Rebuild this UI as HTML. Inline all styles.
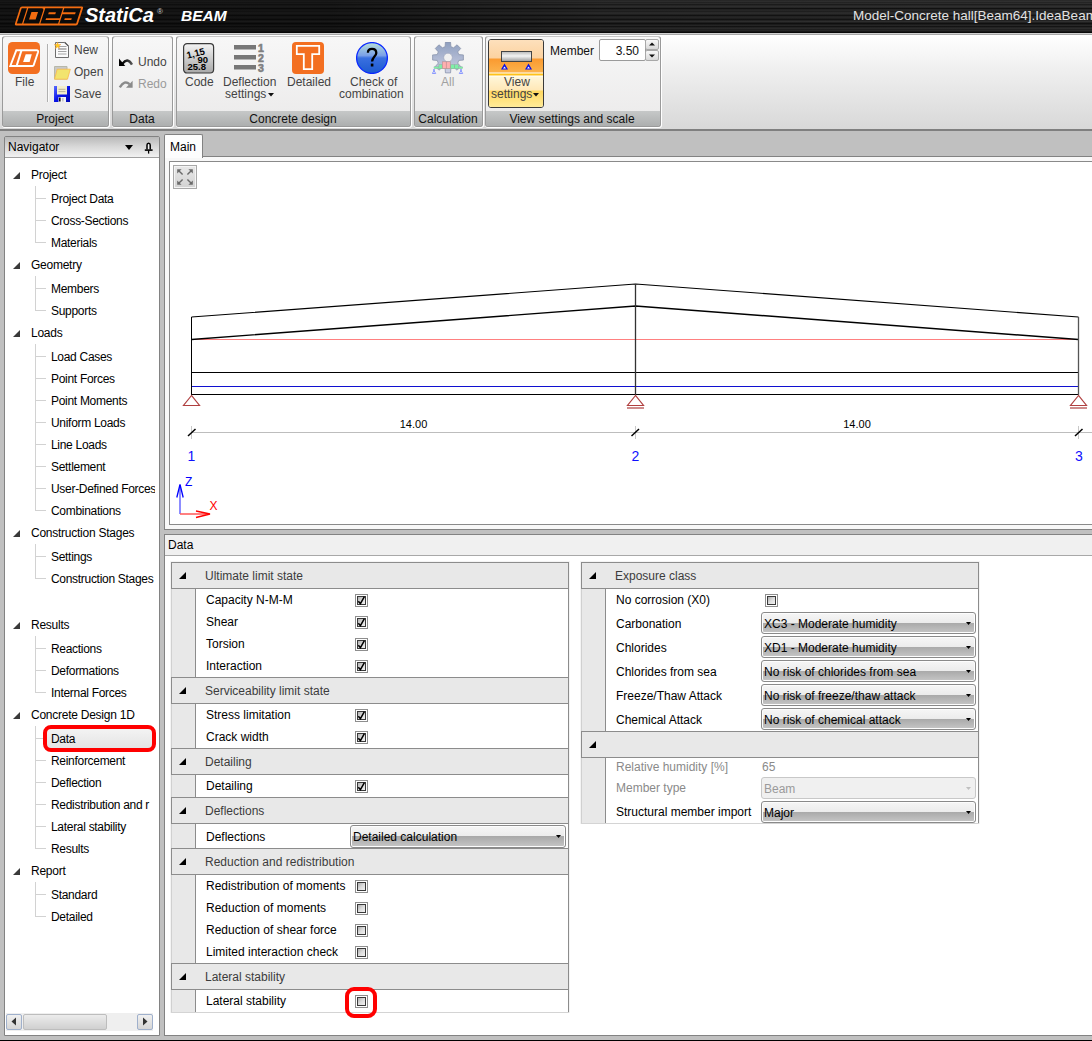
<!DOCTYPE html>
<html><head><meta charset="utf-8"><style>
html,body{margin:0;padding:0;}
body{width:1092px;height:1041px;overflow:hidden;position:relative;background:#c0c0c0;font-family:"Liberation Sans",sans-serif;}
div{position:absolute;}
.t{position:absolute;white-space:nowrap;}
</style></head><body>
<div style="left:0px;top:0px;width:1092px;height:33px;background:linear-gradient(90deg,rgba(0,0,0,0.55) 0%,rgba(0,0,0,0.5) 30%,rgba(0,0,0,0.15) 55%,rgba(0,0,0,0.05) 100%),linear-gradient(180deg,#2c2c2c 0px,#2c2c2c 1px,#333333 1px,#333333 2px,#262626 2px,#262626 3px,#303030 3px,#303030 4px,#1e1e1e 4px,#1e1e1e 5px,#2a2a2a 5px,#2a2a2a 6px,#333333 6px,#333333 7px,#2a2a2a 7px,#2a2a2a 8px,#121212 8px,#121212 9px,#262626 9px,#262626 10px,#2a2a2a 10px,#2a2a2a 11px,#222222 11px,#222222 12px,#2e2e2e 12px,#2e2e2e 13px,#303030 13px,#303030 14px,#242424 14px,#242424 15px,#141414 15px,#141414 16px,#262626 16px,#262626 17px,#2a2a2a 17px,#2a2a2a 18px,#222222 18px,#222222 19px,#151515 19px,#151515 20px,#262626 20px,#262626 21px,#333333 21px,#333333 22px,#222222 22px,#222222 23px,#111111 23px,#111111 24px,#1e1e1e 24px,#1e1e1e 25px,#2a2a2a 25px,#2a2a2a 26px,#151515 26px,#151515 27px,#262626 27px,#262626 28px,#2e2e2e 28px,#2e2e2e 29px,#222222 29px,#222222 30px,#2a2a2a 30px,#2a2a2a 31px,#1a1a1a 31px,#1a1a1a 32px,#0a0a0a 32px,#0a0a0a 33px)"></div>
<div style="left:0px;top:33px;width:1092px;height:1px;background:#d0d0d0"></div>
<div style="left:0px;top:34px;width:1092px;height:1px;background:#a8a8a8"></div>
<div style="left:0px;top:35px;width:1092px;height:94px;background:linear-gradient(180deg,#ffffff 0%,#f0f0f0 35%,#d8d8d8 100%)"></div>
<div style="left:0px;top:129px;width:1092px;height:2px;background:#7f7f7f"></div>
<div style="left:2px;top:36px;width:108px;height:92px;background:#ffffff;border-radius:3px"></div>
<div style="left:2px;top:36px;width:107px;height:91px;background:linear-gradient(180deg,#f7f7f7 0%,#ebeaea 100%);border:1px solid #b4b4b4;box-sizing:border-box;border-radius:3px"></div>
<div style="left:3px;top:111px;width:105px;height:15px;background:linear-gradient(180deg,#c6c8c8 0%,#adafaf 100%);border-radius:0 0 2px 2px"></div>
<div style="left:2px;top:36px;width:107px;height:91px;border:1px solid #9a9a9a;border-top-color:#c8c8c8;box-sizing:border-box;border-radius:3px"></div>
<div class="t" style="left:-145px;width:400px;text-align:center;top:113px;font-size:12px;line-height:12px;color:#111;">Project</div>
<div style="left:112px;top:36px;width:62px;height:92px;background:#ffffff;border-radius:3px"></div>
<div style="left:112px;top:36px;width:61px;height:91px;background:linear-gradient(180deg,#f7f7f7 0%,#ebeaea 100%);border:1px solid #b4b4b4;box-sizing:border-box;border-radius:3px"></div>
<div style="left:113px;top:111px;width:59px;height:15px;background:linear-gradient(180deg,#c6c8c8 0%,#adafaf 100%);border-radius:0 0 2px 2px"></div>
<div style="left:112px;top:36px;width:61px;height:91px;border:1px solid #9a9a9a;border-top-color:#c8c8c8;box-sizing:border-box;border-radius:3px"></div>
<div class="t" style="left:-58px;width:400px;text-align:center;top:113px;font-size:12px;line-height:12px;color:#111;">Data</div>
<div style="left:176px;top:36px;width:236px;height:92px;background:#ffffff;border-radius:3px"></div>
<div style="left:176px;top:36px;width:235px;height:91px;background:linear-gradient(180deg,#f7f7f7 0%,#ebeaea 100%);border:1px solid #b4b4b4;box-sizing:border-box;border-radius:3px"></div>
<div style="left:177px;top:111px;width:233px;height:15px;background:linear-gradient(180deg,#c6c8c8 0%,#adafaf 100%);border-radius:0 0 2px 2px"></div>
<div style="left:176px;top:36px;width:235px;height:91px;border:1px solid #9a9a9a;border-top-color:#c8c8c8;box-sizing:border-box;border-radius:3px"></div>
<div class="t" style="left:93px;width:400px;text-align:center;top:113px;font-size:12px;line-height:12px;color:#111;">Concrete design</div>
<div style="left:414px;top:36px;width:70px;height:92px;background:#ffffff;border-radius:3px"></div>
<div style="left:414px;top:36px;width:69px;height:91px;background:linear-gradient(180deg,#f7f7f7 0%,#ebeaea 100%);border:1px solid #b4b4b4;box-sizing:border-box;border-radius:3px"></div>
<div style="left:415px;top:111px;width:67px;height:15px;background:linear-gradient(180deg,#c6c8c8 0%,#adafaf 100%);border-radius:0 0 2px 2px"></div>
<div style="left:414px;top:36px;width:69px;height:91px;border:1px solid #9a9a9a;border-top-color:#c8c8c8;box-sizing:border-box;border-radius:3px"></div>
<div class="t" style="left:248px;width:400px;text-align:center;top:113px;font-size:12px;line-height:12px;color:#111;">Calculation</div>
<div style="left:485px;top:36px;width:177px;height:92px;background:#ffffff;border-radius:3px"></div>
<div style="left:485px;top:36px;width:176px;height:91px;background:linear-gradient(180deg,#f7f7f7 0%,#ebeaea 100%);border:1px solid #b4b4b4;box-sizing:border-box;border-radius:3px"></div>
<div style="left:486px;top:111px;width:174px;height:15px;background:linear-gradient(180deg,#c6c8c8 0%,#adafaf 100%);border-radius:0 0 2px 2px"></div>
<div style="left:485px;top:36px;width:176px;height:91px;border:1px solid #9a9a9a;border-top-color:#c8c8c8;box-sizing:border-box;border-radius:3px"></div>
<div class="t" style="left:372px;width:400px;text-align:center;top:113px;font-size:12px;line-height:12px;color:#111;">View settings and scale</div>
<svg style="position:absolute;left:8px;top:42px;" width="32" height="32" viewBox="0 0 32 32"><rect x="0" y="0" width="32" height="32" rx="4.5" fill="#f36f21"/><path d="M8.3 8.3 H28.6 Q30.6 8.3 30 10.3 L25.6 23.4 Q25.3 24 24.6 24 H2.3 Z" fill="none" stroke="#fff" stroke-width="1.9"/><path d="M13.4 8.6 L8.7 23.6" stroke="#fff" stroke-width="1.9"/><path d="M17.7 12.3 H23.8 L21.6 19.9 H15.1 Z" fill="#fff"/></svg>
<div class="t" style="left:15px;top:76px;font-size:12px;line-height:12px;color:#444;">File</div>
<div style="left:47px;top:44px;width:1px;height:58px;background:#b0b0b0"></div>
<div style="left:48px;top:44px;width:1px;height:58px;background:#fafafa"></div>
<svg style="position:absolute;left:54px;top:41px;" width="17" height="18" viewBox="0 0 17 18"><path d="M1.5 1.5 H10.8 L14.5 5.2 V16.5 H1.5 Z" fill="#fbfbfb" stroke="#6e6e6e" stroke-width="1"/><path d="M10.8 1.5 L14.5 5.2" stroke="#555" stroke-width="1.2"/><path d="M4 5.5h8.5M4 10.5h8.5M4 13h8.5" stroke="#9a9a9a" stroke-width="0.9"/><path d="M4 8h8.5" stroke="#a8a8a8" stroke-width="1.6"/><path d="M3.5 1.2 L4.3 3.6 L6.8 3.6 L4.8 5.1 L5.6 7.5 L3.5 6 L1.4 7.5 L2.2 5.1 L0.2 3.6 L2.7 3.6 Z" fill="#ffd21a" stroke="#f39a3a" stroke-width="0.5"/></svg>
<div class="t" style="left:74px;top:44px;font-size:12px;line-height:12px;color:#444;">New</div>
<svg style="position:absolute;left:54px;top:66px;" width="17" height="14" viewBox="0 0 17 14"><path d="M0.5 0.5 H13 V13 H0.5 Z" fill="#c8c8c8" stroke="#b8b8a8" stroke-width="1"/><path d="M3.2 3.2 H16.3 L13.5 13.2 H0.5 Z" fill="#f2e46e" stroke="#fbb94a" stroke-width="0.8"/></svg>
<div class="t" style="left:74px;top:66px;font-size:12px;line-height:12px;color:#444;">Open</div>
<svg style="position:absolute;left:54px;top:86px;" width="16" height="16" viewBox="0 0 16 16"><defs><linearGradient id="gs" x1="0" y1="0" x2="1" y2="1"><stop offset="0" stop-color="#5a6cff"/><stop offset="0.5" stop-color="#0a14e8"/><stop offset="1" stop-color="#0008b0"/></linearGradient></defs><rect x="0" y="0" width="16" height="16" fill="url(#gs)"/><rect x="3" y="0" width="10" height="8.5" fill="#f4efcc"/><path d="M4.5 3.3h7M4.5 5.6h7" stroke="#a8a08a" stroke-width="0.8"/><rect x="4.5" y="11" width="7.5" height="5" fill="#f4f4f4"/><rect x="5" y="11.5" width="1.6" height="4" fill="#111"/><rect x="8.5" y="12" width="0.8" height="3.5" fill="#999"/></svg>
<div class="t" style="left:74px;top:88px;font-size:12px;line-height:12px;color:#444;">Save</div>
<svg style="position:absolute;left:118px;top:56px;" width="16" height="12" viewBox="0 0 16 12"><defs><linearGradient id="gu" x1="0" y1="0" x2="1" y2="0"><stop offset="0" stop-color="#000"/><stop offset="1" stop-color="#555"/></linearGradient></defs><path d="M4.5 7.6 Q9.5 0.8 14 8.6" fill="none" stroke="url(#gu)" stroke-width="2.4"/><polygon points="1,2.6 1,10 7.3,10" fill="#000"/></svg>
<div class="t" style="left:138px;top:56px;font-size:12px;line-height:12px;color:#444;">Undo</div>
<svg style="position:absolute;left:118px;top:79px;" width="16" height="12" viewBox="0 0 16 12"><path d="M1.8 8.4 Q6.5 0.6 11.5 5.2" fill="none" stroke="#8a8a8a" stroke-width="2.4"/><polygon points="14.6,1.8 14.6,8.8 8,8.8" fill="#8a8a8a"/></svg>
<div class="t" style="left:138px;top:78px;font-size:12px;line-height:12px;color:#9a9a9a;">Redo</div>
<svg style="position:absolute;left:182px;top:42px;" width="33" height="32" viewBox="0 0 33 32"><defs><linearGradient id="gc" x1="0" y1="0" x2="0" y2="1"><stop offset="0" stop-color="#f4f4f4"/><stop offset="1" stop-color="#a8a8a8"/></linearGradient></defs><rect x="1.6" y="1.6" width="30" height="29.4" rx="3.5" fill="url(#gc)" stroke="#3a3a3a" stroke-width="1.2"/><text x="4.5" y="15" font-family="Liberation Sans" font-weight="bold" font-size="9.5" fill="#000" transform="rotate(-14 12 12)">1,15</text><text x="15.5" y="20.5" font-family="Liberation Sans" font-weight="bold" font-size="9.5" fill="#000">90</text><text x="5.5" y="28" font-family="Liberation Sans" font-weight="bold" font-size="9.5" fill="#000">25.8</text></svg>
<div class="t" style="left:185px;top:76px;font-size:12px;line-height:12px;color:#444;">Code</div>
<svg style="position:absolute;left:232px;top:42px;" width="34" height="32" viewBox="0 0 34 32"><rect x="2" y="3" width="22" height="4.5" fill="#777"/><rect x="2" y="13" width="22" height="4.5" fill="#777"/><rect x="2" y="23" width="22" height="4.5" fill="#777"/><text x="26" y="9.8" font-family="Liberation Sans" font-weight="bold" font-size="10.5" fill="#808080" stroke="#808080" stroke-width="0.6">1</text><text x="26" y="19.8" font-family="Liberation Sans" font-weight="bold" font-size="10.5" fill="#808080" stroke="#808080" stroke-width="0.6">2</text><text x="26" y="29.8" font-family="Liberation Sans" font-weight="bold" font-size="10.5" fill="#808080" stroke="#808080" stroke-width="0.6">3</text></svg>
<div class="t" style="left:223px;top:76px;font-size:12px;line-height:12px;color:#444;">Deflection</div>
<div class="t" style="left:225px;top:88px;font-size:12px;line-height:12px;color:#444;">settings</div>
<svg style="position:absolute;left:268px;top:93px;" width="6" height="4" viewBox="0 0 6 4"><polygon points="0,0 6,0 3,3.5" fill="#111"/></svg>
<svg style="position:absolute;left:292px;top:42px;" width="32" height="32" viewBox="0 0 32 32"><rect x="0" y="0" width="32" height="32" rx="4" fill="#f36f21"/><path d="M4.8 3.8 H27.2 V12.2 H20.2 V27.2 H11.8 V12.2 H4.8 Z" fill="none" stroke="#fff" stroke-width="1.8"/></svg>
<div class="t" style="left:287px;top:76px;font-size:12px;line-height:12px;color:#444;">Detailed</div>
<svg style="position:absolute;left:356px;top:42px;" width="32" height="32" viewBox="0 0 32 32"><defs><linearGradient id="gq" x1="0" y1="0" x2="0" y2="1"><stop offset="0" stop-color="#b8e0d8"/><stop offset="0.42" stop-color="#7aa0e8"/><stop offset="0.5" stop-color="#3a70e0"/><stop offset="1" stop-color="#1c5ad0"/></linearGradient></defs><circle cx="16" cy="16" r="15.4" fill="url(#gq)" stroke="#0a28ff" stroke-width="1.3"/><path d="M11.9 10.8 C11.9 8 13.8 6.9 16 6.9 C18.6 6.9 20.3 8.6 20.3 11 C20.3 14.2 16.1 15.2 16.1 19.6" fill="none" stroke="#000" stroke-width="2.3"/><rect x="14.8" y="21.6" width="2.6" height="2.9" fill="#000"/></svg>
<div class="t" style="left:350px;top:76px;font-size:12px;line-height:12px;color:#444;">Check of</div>
<div class="t" style="left:339px;top:88px;font-size:12px;line-height:12px;color:#444;">combination</div>
<svg style="position:absolute;left:432px;top:42px;" width="32" height="32" viewBox="0 0 32 32"><defs><linearGradient id="gg" x1="0" y1="0" x2="0" y2="1"><stop offset="0" stop-color="#8e9fbf"/><stop offset="1" stop-color="#cdd0e4"/></linearGradient></defs><path d="M13.10 4.68 L13.43 0.11 L18.57 0.11 L18.90 4.68 L21.60 5.80 L25.06 2.80 L28.70 6.44 L25.70 9.90 L26.82 12.60 L31.39 12.93 L31.39 18.07 L26.82 18.40 L25.70 21.10 L28.70 24.56 L25.06 28.20 L21.60 25.20 L18.90 26.32 L18.57 30.89 L13.43 30.89 L13.10 26.32 L10.40 25.20 L6.94 28.20 L3.30 24.56 L6.30 21.10 L5.18 18.40 L0.61 18.07 L0.61 12.93 L5.18 12.60 L6.30 9.90 L3.30 6.44 L6.94 2.80 L10.40 5.80 Z" fill="url(#gg)" stroke="#8a94ac" stroke-width="0.8"/><circle cx="16" cy="15.5" r="4.3" fill="#f0f0f0" stroke="#9aa2b8" stroke-width="0.6"/><rect x="2" y="24.8" width="28.7" height="1.8" fill="#7ef0a8" stroke="#8aa89a" stroke-width="0.4"/><rect x="6.9" y="22.6" width="3.2" height="4" fill="#7ef0a8" stroke="#8aa89a" stroke-width="0.4"/><rect x="18.8" y="22.6" width="3.4" height="4" fill="#7ef0a8" stroke="#8aa89a" stroke-width="0.4"/><rect x="22.8" y="22.6" width="3.5" height="4" fill="#7ef0a8" stroke="#8aa89a" stroke-width="0.4"/><rect x="10.3" y="19.8" width="7.9" height="6.8" fill="#ffb0b0" stroke="#b08888" stroke-width="0.5"/><path d="M14.4 19.8v6.8" stroke="#b08888" stroke-width="0.6"/><path d="M0.3 31.5 L2 28.6 L3.7 31.5 Z M27.3 31.5 L29 28.6 L30.7 31.5 Z" fill="none" stroke="#7f8fff" stroke-width="0.9"/><circle cx="2" cy="28" r="0.9" fill="#7f8fff"/><circle cx="29" cy="28" r="0.9" fill="#7f8fff"/></svg>
<div class="t" style="left:441px;top:76px;font-size:12px;line-height:12px;color:#a0a0a0;">All</div>
<div style="left:488px;top:39px;width:56px;height:69px;border:1px solid #3a3a3a;box-sizing:border-box;border-radius:3px;background:#fff"></div>
<div style="left:489px;top:40px;width:54px;height:67px;border-radius:2px;background:linear-gradient(180deg,#fde0bc 0px,#fcd2a0 18px,#fa9a30 19px,#fbb24c 32px,#ffffff 33px,#ffc21a 34px,#ffc21a 35px,#ffffff 36px,#fff6d8 37px,#ffe8b8 50px,#ffd860 51px,#ffeb98 67px)"></div>
<svg style="position:absolute;left:500px;top:50px;" width="34" height="22" viewBox="0 0 34 22"><defs><linearGradient id="gb" x1="0" y1="0" x2="0" y2="1"><stop offset="0" stop-color="#b8b8b8"/><stop offset="0.45" stop-color="#f4f4f4"/><stop offset="1" stop-color="#9a9a9a"/></linearGradient></defs><rect x="1.5" y="1.5" width="30" height="10" fill="url(#gb)" stroke="#444" stroke-width="1"/><path d="M4.5 13.5 L1 19.5 H8 Z M28.5 13.5 L25 19.5 H32 Z" fill="#0a10e8"/><path d="M4.5 16.5 L3 18.5 H6 Z M28.5 16.5 L27 18.5 H30 Z" fill="#fff"/></svg>
<div class="t" style="left:504px;top:76px;font-size:12px;line-height:12px;color:#444;">View</div>
<div class="t" style="left:491px;top:88px;font-size:12px;line-height:12px;color:#444;">settings</div>
<svg style="position:absolute;left:533px;top:93px;" width="6" height="4" viewBox="0 0 6 4"><polygon points="0,0 6,0 3,3.5" fill="#111"/></svg>
<div class="t" style="left:550px;top:45px;font-size:12px;line-height:12px;color:#111;">Member</div>
<div style="left:599px;top:39px;width:47px;height:22px;background:#fff;border:1px solid #9a9a9a;box-sizing:border-box;border-radius:2px"></div>
<div class="t" style="right:453px;top:45px;font-size:12px;line-height:12px;color:#111;">3.50</div>
<div style="left:645px;top:39px;width:14px;height:11px;background:linear-gradient(180deg,#f8f8f8,#d8d8d8);border:1px solid #a8a8a8;box-sizing:border-box;border-radius:2px"></div>
<div style="left:645px;top:50px;width:14px;height:11px;background:linear-gradient(180deg,#f8f8f8,#d8d8d8);border:1px solid #a8a8a8;box-sizing:border-box;border-radius:2px"></div>
<svg style="position:absolute;left:649px;top:42px;" width="6" height="4" viewBox="0 0 6 4"><polygon points="0,3.5 6,3.5 3,0.5" fill="#111"/></svg>
<svg style="position:absolute;left:649px;top:54px;" width="6" height="4" viewBox="0 0 6 4"><polygon points="0,0.5 6,0.5 3,3.5" fill="#111"/></svg>
<svg style="position:absolute;left:0px;top:0px;" width="100" height="33" viewBox="0 0 100 33"><g transform="translate(0,25.4) skewX(-17.7) translate(0,-25.4)"><rect x="14.4" y="6.4" width="63.1" height="19" rx="1.6" fill="#f36c10"/><g fill="#0a0a0a"><rect x="16.2" y="8.3" width="5.3" height="15.3"/><path d="M22.8 8.3 H36.5 Q38.5 8.3 38.5 10.3 V23.6 H22.8 Z M27.2 12.1 V19.6 H33.8 V12.1 Z" fill-rule="evenodd"/><path d="M39.8 8.3 H57.5 V18.2 H43.8 V20 H57.5 V23.6 H39.8 Z M44.6 12.2 V14.2 H51.7 V12.2 Z" fill-rule="evenodd"/><path d="M58.8 8.3 H75.6 V23.6 H58.8 V14.2 H71.5 V12.2 H58.8 Z M62.5 18.2 V20 H69.5 V18.2 Z" fill-rule="evenodd"/></g></g></svg>
<div class="t" style="left:85px;top:5px;font-size:20px;line-height:20px;color:#fff;font-weight:bold;font-style:italic;letter-spacing:0px">StatiCa</div>
<div class="t" style="left:157px;top:8px;font-size:8px;line-height:8px;color:#ccc;">&reg;</div>
<div class="t" style="left:181px;top:8px;font-size:15.5px;line-height:15.5px;color:#fff;font-weight:bold;font-style:italic;">BEAM</div>
<div class="t" style="left:853px;top:9px;font-size:13.5px;line-height:13.5px;color:#e2e2e2;">Model-Concrete hall[Beam64].IdeaBeam</div>
<div style="left:4px;top:136px;width:156px;height:900px;background:#fff;border:1px solid #828282;box-sizing:border-box;border-radius:2px 2px 0 0"></div>
<div style="left:5px;top:137px;width:154px;height:21px;background:linear-gradient(180deg,#b9b9b9 0%,#d6d6d6 45%,#f2f2f2 100%);border-bottom:1px solid #a0a0a0;box-sizing:border-box"></div>
<div class="t" style="left:8px;top:141px;font-size:12px;line-height:12px;color:#000;">Navigator</div>
<div style="left:164px;top:131px;width:928px;height:26px;background:#c0c0c0"></div>
<div style="left:202px;top:156px;width:890px;height:1px;background:#828282"></div>
<div style="left:164px;top:157px;width:928px;height:373px;background:#f8f8f8;border-left:1px solid #828282;border-bottom:1px solid #828282;box-sizing:border-box"></div>
<div style="left:164px;top:134px;width:39px;height:24px;background:#fdfdfd;border:1px solid #828282;border-bottom:none;box-sizing:border-box;border-radius:2px 2px 0 0"></div>
<div class="t" style="left:170px;top:141px;font-size:12px;line-height:12px;color:#000;">Main</div>
<div style="left:169px;top:161px;width:923px;height:364px;background:#fff;border-left:1px solid #8a8a8a;border-top:1px solid #8a8a8a;border-bottom:1px solid #8a8a8a;box-sizing:border-box"></div>
<div style="left:173px;top:165px;width:24px;height:24px;background:linear-gradient(180deg,#e8e8e8,#d2d2d2);border:1px solid #a8a8a8;box-shadow:inset 0 0 0 1px #f4f4f4;box-sizing:border-box"></div>
<svg style="position:absolute;left:173px;top:165px;" width="24" height="24" viewBox="0 0 24 24"><g fill="#6a6a6a" stroke="#6a6a6a" stroke-width="1.4"><path d="M4.2 4.2 H8.6 L4.2 8.6 Z" stroke="none"/><path d="M6 6 L9.6 9.6"/><path d="M19.8 4.2 H15.4 L19.8 8.6 Z" stroke="none"/><path d="M18 6 L14.4 9.6"/><path d="M4.2 19.8 H8.6 L4.2 15.4 Z" stroke="none"/><path d="M6 18 L9.6 14.4"/><path d="M19.8 19.8 H15.4 L19.8 15.4 Z" stroke="none"/><path d="M18 18 L14.4 14.4"/></g></svg>
<svg style="position:absolute;left:0px;top:0px;" width="1092" height="530" viewBox="0 0 1092 530">
<line x1="191.5" y1="339.5" x2="1078.5" y2="339.5" stroke="#ff8080" stroke-width="1"/>
<polyline points="191.5,317 635.5,284 1078.5,317" fill="none" stroke="#000" stroke-width="1.1"/>
<polyline points="191.5,339.5 635.5,306 1078.5,339.5" fill="none" stroke="#000" stroke-width="1.4"/>
<line x1="191.5" y1="372.5" x2="1078.5" y2="372.5" stroke="#000" stroke-width="1.05"/>
<line x1="191.5" y1="386.5" x2="1078.5" y2="386.5" stroke="#1010d0" stroke-width="1.2"/>
<line x1="191.5" y1="394.5" x2="1078.5" y2="394.5" stroke="#000" stroke-width="1.2"/>
<line x1="191.5" y1="317" x2="191.5" y2="395" stroke="#000" stroke-width="1"/>
<line x1="635.5" y1="284" x2="635.5" y2="395" stroke="#333" stroke-width="1.3"/>
<line x1="1078.5" y1="317" x2="1078.5" y2="395" stroke="#555" stroke-width="1.3"/>
<g fill="none" stroke="#b04040" stroke-width="1.2">
<polygon points="191.5,395.5 183.5,405.5 199.5,405.5"/>
<polygon points="635.5,395.5 627.5,405.5 643.5,405.5"/><line x1="627" y1="408" x2="644" y2="408"/>
<polygon points="1078.5,395.5 1070.5,405.5 1086.5,405.5"/><line x1="1070" y1="408" x2="1087" y2="408"/>
</g>
<line x1="191" y1="432.5" x2="1092" y2="432.5" stroke="#bdbdbd" stroke-width="1.2"/>
<g stroke="#c8c8c8" stroke-width="1"><line x1="191.5" y1="426" x2="191.5" y2="439"/><line x1="635.5" y1="426" x2="635.5" y2="439"/><line x1="1078.5" y1="426" x2="1078.5" y2="439"/></g>
<g stroke="#000" stroke-width="1.5"><line x1="188" y1="436" x2="195.5" y2="429"/><line x1="631.5" y1="436" x2="639" y2="429"/><line x1="1075" y1="436" x2="1082.5" y2="429"/></g>
<text x="413.5" y="428" text-anchor="middle" font-family="Liberation Sans" font-size="11" fill="#000">14.00</text>
<text x="857" y="428" text-anchor="middle" font-family="Liberation Sans" font-size="11" fill="#000">14.00</text>
<g font-family="Liberation Sans" font-size="14" fill="#1010ff" text-anchor="middle"><text x="191.5" y="461">1</text><text x="635.5" y="461">2</text><text x="1079" y="461">3</text></g>
<line x1="180" y1="514" x2="180" y2="485" stroke="#7070ff" stroke-width="1.6"/>
<polyline points="176.8,497.5 180,484.5 183.2,497.5" fill="none" stroke="#0000ff" stroke-width="1.3"/>
<line x1="180" y1="514" x2="209" y2="514" stroke="#ff6060" stroke-width="1.6"/>
<polyline points="196,511 210,514 196,517.5" fill="none" stroke="#ff0000" stroke-width="1.3"/>
<text x="185" y="486" font-family="Liberation Sans" font-size="12" fill="#0000ff">Z</text>
<text x="209.5" y="510" font-family="Liberation Sans" font-size="12" fill="#ff0000">X</text>
</svg>
<div style="left:164px;top:534px;width:928px;height:502px;background:#fff;border-left:1px solid #828282;border-top:1px solid #828282;border-bottom:1px solid #828282;box-sizing:border-box"></div>
<div style="left:165px;top:535px;width:927px;height:21px;background:#f0f0f0;border-bottom:1px solid #a8a8a8;box-sizing:border-box"></div>
<div class="t" style="left:168px;top:539px;font-size:12px;line-height:12px;color:#000;">Data</div>
<div style="left:0;top:0;width:155px;height:1012px;overflow:hidden">
<svg style="position:absolute;left:12px;top:171px;" width="10" height="9" viewBox="0 0 10 9"><polygon points="8,1 8,8 1,8" fill="#3a3a3a"/></svg>
<div class="t" style="left:31px;top:169px;font-size:12px;line-height:12px;color:#000;letter-spacing:-0.25px">Project</div>
<div style="left:35px;top:186px;width:1px;height:57px;background:#d2d2d2"></div>
<div style="left:36px;top:198px;width:10px;height:1px;background:#d2d2d2"></div>
<div class="t" style="left:51px;top:193px;font-size:12px;line-height:12px;color:#000;letter-spacing:-0.3px">Project Data</div>
<div style="left:36px;top:220px;width:10px;height:1px;background:#d2d2d2"></div>
<div class="t" style="left:51px;top:215px;font-size:12px;line-height:12px;color:#000;letter-spacing:-0.3px">Cross-Sections</div>
<div style="left:36px;top:242px;width:10px;height:1px;background:#d2d2d2"></div>
<div class="t" style="left:51px;top:237px;font-size:12px;line-height:12px;color:#000;letter-spacing:-0.3px">Materials</div>
<svg style="position:absolute;left:12px;top:261px;" width="10" height="9" viewBox="0 0 10 9"><polygon points="8,1 8,8 1,8" fill="#3a3a3a"/></svg>
<div class="t" style="left:31px;top:259px;font-size:12px;line-height:12px;color:#000;letter-spacing:-0.25px">Geometry</div>
<div style="left:35px;top:276px;width:1px;height:35px;background:#d2d2d2"></div>
<div style="left:36px;top:288px;width:10px;height:1px;background:#d2d2d2"></div>
<div class="t" style="left:51px;top:283px;font-size:12px;line-height:12px;color:#000;letter-spacing:-0.3px">Members</div>
<div style="left:36px;top:310px;width:10px;height:1px;background:#d2d2d2"></div>
<div class="t" style="left:51px;top:305px;font-size:12px;line-height:12px;color:#000;letter-spacing:-0.3px">Supports</div>
<svg style="position:absolute;left:12px;top:329px;" width="10" height="9" viewBox="0 0 10 9"><polygon points="8,1 8,8 1,8" fill="#3a3a3a"/></svg>
<div class="t" style="left:31px;top:327px;font-size:12px;line-height:12px;color:#000;letter-spacing:-0.25px">Loads</div>
<div style="left:35px;top:344px;width:1px;height:167px;background:#d2d2d2"></div>
<div style="left:36px;top:356px;width:10px;height:1px;background:#d2d2d2"></div>
<div class="t" style="left:51px;top:351px;font-size:12px;line-height:12px;color:#000;letter-spacing:-0.3px">Load Cases</div>
<div style="left:36px;top:378px;width:10px;height:1px;background:#d2d2d2"></div>
<div class="t" style="left:51px;top:373px;font-size:12px;line-height:12px;color:#000;letter-spacing:-0.3px">Point Forces</div>
<div style="left:36px;top:400px;width:10px;height:1px;background:#d2d2d2"></div>
<div class="t" style="left:51px;top:395px;font-size:12px;line-height:12px;color:#000;letter-spacing:-0.3px">Point Moments</div>
<div style="left:36px;top:422px;width:10px;height:1px;background:#d2d2d2"></div>
<div class="t" style="left:51px;top:417px;font-size:12px;line-height:12px;color:#000;letter-spacing:-0.3px">Uniform Loads</div>
<div style="left:36px;top:444px;width:10px;height:1px;background:#d2d2d2"></div>
<div class="t" style="left:51px;top:439px;font-size:12px;line-height:12px;color:#000;letter-spacing:-0.3px">Line Loads</div>
<div style="left:36px;top:466px;width:10px;height:1px;background:#d2d2d2"></div>
<div class="t" style="left:51px;top:461px;font-size:12px;line-height:12px;color:#000;letter-spacing:-0.3px">Settlement</div>
<div style="left:36px;top:488px;width:10px;height:1px;background:#d2d2d2"></div>
<div class="t" style="left:51px;top:483px;font-size:12px;line-height:12px;color:#000;letter-spacing:-0.3px">User-Defined Forces</div>
<div style="left:36px;top:510px;width:10px;height:1px;background:#d2d2d2"></div>
<div class="t" style="left:51px;top:505px;font-size:12px;line-height:12px;color:#000;letter-spacing:-0.3px">Combinations</div>
<svg style="position:absolute;left:12px;top:529px;" width="10" height="9" viewBox="0 0 10 9"><polygon points="8,1 8,8 1,8" fill="#3a3a3a"/></svg>
<div class="t" style="left:31px;top:527px;font-size:12px;line-height:12px;color:#000;letter-spacing:-0.25px">Construction Stages</div>
<div style="left:35px;top:544px;width:1px;height:35px;background:#d2d2d2"></div>
<div style="left:36px;top:556px;width:10px;height:1px;background:#d2d2d2"></div>
<div class="t" style="left:51px;top:551px;font-size:12px;line-height:12px;color:#000;letter-spacing:-0.3px">Settings</div>
<div style="left:36px;top:578px;width:10px;height:1px;background:#d2d2d2"></div>
<div class="t" style="left:51px;top:573px;font-size:12px;line-height:12px;color:#000;letter-spacing:-0.3px">Construction Stages</div>
<svg style="position:absolute;left:12px;top:621px;" width="10" height="9" viewBox="0 0 10 9"><polygon points="8,1 8,8 1,8" fill="#3a3a3a"/></svg>
<div class="t" style="left:31px;top:619px;font-size:12px;line-height:12px;color:#000;letter-spacing:-0.25px">Results</div>
<div style="left:35px;top:636px;width:1px;height:57px;background:#d2d2d2"></div>
<div style="left:36px;top:648px;width:10px;height:1px;background:#d2d2d2"></div>
<div class="t" style="left:51px;top:643px;font-size:12px;line-height:12px;color:#000;letter-spacing:-0.3px">Reactions</div>
<div style="left:36px;top:670px;width:10px;height:1px;background:#d2d2d2"></div>
<div class="t" style="left:51px;top:665px;font-size:12px;line-height:12px;color:#000;letter-spacing:-0.3px">Deformations</div>
<div style="left:36px;top:692px;width:10px;height:1px;background:#d2d2d2"></div>
<div class="t" style="left:51px;top:687px;font-size:12px;line-height:12px;color:#000;letter-spacing:-0.3px">Internal Forces</div>
<svg style="position:absolute;left:12px;top:711px;" width="10" height="9" viewBox="0 0 10 9"><polygon points="8,1 8,8 1,8" fill="#3a3a3a"/></svg>
<div class="t" style="left:31px;top:709px;font-size:12px;line-height:12px;color:#000;letter-spacing:-0.25px">Concrete Design 1D</div>
<div style="left:35px;top:726px;width:1px;height:123px;background:#d2d2d2"></div>
<div style="left:36px;top:738px;width:10px;height:1px;background:#d2d2d2"></div>
<div style="left:46px;top:727px;width:107px;height:22px;background:linear-gradient(180deg,#f4f4f4,#e4e4e4);border:1px solid #d0d0d0;box-sizing:border-box;border-radius:3px"></div>
<div class="t" style="left:51px;top:733px;font-size:12px;line-height:12px;color:#000;letter-spacing:-0.3px">Data</div>
<div style="left:36px;top:760px;width:10px;height:1px;background:#d2d2d2"></div>
<div class="t" style="left:51px;top:755px;font-size:12px;line-height:12px;color:#000;letter-spacing:-0.3px">Reinforcement</div>
<div style="left:36px;top:782px;width:10px;height:1px;background:#d2d2d2"></div>
<div class="t" style="left:51px;top:777px;font-size:12px;line-height:12px;color:#000;letter-spacing:-0.3px">Deflection</div>
<div style="left:36px;top:804px;width:10px;height:1px;background:#d2d2d2"></div>
<div class="t" style="left:51px;top:799px;font-size:12px;line-height:12px;color:#000;letter-spacing:-0.3px">Redistribution and r</div>
<div style="left:36px;top:826px;width:10px;height:1px;background:#d2d2d2"></div>
<div class="t" style="left:51px;top:821px;font-size:12px;line-height:12px;color:#000;letter-spacing:-0.3px">Lateral stability</div>
<div style="left:36px;top:848px;width:10px;height:1px;background:#d2d2d2"></div>
<div class="t" style="left:51px;top:843px;font-size:12px;line-height:12px;color:#000;letter-spacing:-0.3px">Results</div>
<svg style="position:absolute;left:12px;top:867px;" width="10" height="9" viewBox="0 0 10 9"><polygon points="8,1 8,8 1,8" fill="#3a3a3a"/></svg>
<div class="t" style="left:31px;top:865px;font-size:12px;line-height:12px;color:#000;letter-spacing:-0.25px">Report</div>
<div style="left:35px;top:882px;width:1px;height:35px;background:#d2d2d2"></div>
<div style="left:36px;top:894px;width:10px;height:1px;background:#d2d2d2"></div>
<div class="t" style="left:51px;top:889px;font-size:12px;line-height:12px;color:#000;letter-spacing:-0.3px">Standard</div>
<div style="left:36px;top:916px;width:10px;height:1px;background:#d2d2d2"></div>
<div class="t" style="left:51px;top:911px;font-size:12px;line-height:12px;color:#000;letter-spacing:-0.3px">Detailed</div>
</div>
<div style="left:43px;top:725px;width:113px;height:27px;border:4px solid #f00;box-sizing:border-box;border-radius:8px"></div>
<div style="left:5px;top:1013px;width:154px;height:18px;background:#fff"></div>
<div style="left:6px;top:1013px;width:147px;height:18px;background:#efefef"></div>
<div style="left:6px;top:1014px;width:16px;height:16px;background:linear-gradient(180deg,#f0f0f0,#d6d6d6);border:1px solid #9fb0cc;box-sizing:border-box;border-radius:2px"></div>
<div style="left:23px;top:1014px;width:84px;height:16px;background:linear-gradient(180deg,#ececec,#d0d0d0);border:1px solid #bdbdbd;box-sizing:border-box;border-radius:2px"></div>
<div style="left:137px;top:1014px;width:16px;height:16px;background:linear-gradient(180deg,#f0f0f0,#d6d6d6);border:1px solid #9fb0cc;box-sizing:border-box;border-radius:2px"></div>
<svg style="position:absolute;left:10px;top:1017px;" width="8" height="10" viewBox="0 0 8 10"><polygon points="6,0.5 6,8.5 1.5,4.5" fill="#333"/></svg>
<svg style="position:absolute;left:141px;top:1017px;" width="8" height="10" viewBox="0 0 8 10"><polygon points="2,0.5 2,8.5 6.5,4.5" fill="#333"/></svg>
<svg style="position:absolute;left:124px;top:144px;" width="10" height="7" viewBox="0 0 10 7"><polygon points="1,1 9,1 5,6" fill="#000"/></svg>
<svg style="position:absolute;left:143px;top:142px;" width="11" height="12" viewBox="0 0 11 12"><path d="M4 7.5 V3 Q4 1.2 5.6 1.2 Q7.2 1.2 7.2 3 V7.5" fill="#f0f0f0" stroke="#000" stroke-width="1.5"/><path d="M1.8 8.1 H9.6" stroke="#000" stroke-width="1.6"/><path d="M5.6 8.5 V11.6" stroke="#000" stroke-width="1.3"/></svg>
<div style="left:170px;top:561px;width:400px;height:452px;background:#f4f4f4"></div>
<div style="left:171px;top:562px;width:398px;height:450px;background:#fff"></div>
<div style="left:171px;top:562px;width:25px;height:450px;background:#e8e8e8"></div>
<div style="left:195px;top:562px;width:1px;height:450px;background:#8c8c8c"></div>
<div style="left:171px;top:562px;width:1px;height:450px;background:#d0d0d0"></div>
<div style="left:568px;top:562px;width:1px;height:450px;background:#8c8c8c"></div>
<div style="left:171px;top:1012px;width:398px;height:1px;background:#d4d4d4"></div>
<div style="left:171px;top:562px;width:398px;height:27px;background:#e8e8e8;border:1px solid #8c8c8c;box-sizing:border-box"></div>
<svg style="position:absolute;left:179px;top:572px;" width="7" height="7" viewBox="0 0 7 7"><polygon points="7,0 7,7 0,7" fill="#000"/></svg>
<div class="t" style="left:205px;top:570px;font-size:12px;line-height:12px;color:#3c3c3c;">Ultimate limit state</div>
<div style="left:171px;top:677px;width:398px;height:27px;background:#e8e8e8;border:1px solid #8c8c8c;box-sizing:border-box"></div>
<svg style="position:absolute;left:179px;top:687px;" width="7" height="7" viewBox="0 0 7 7"><polygon points="7,0 7,7 0,7" fill="#000"/></svg>
<div class="t" style="left:205px;top:685px;font-size:12px;line-height:12px;color:#3c3c3c;">Serviceability limit state</div>
<div style="left:171px;top:748px;width:398px;height:27px;background:#e8e8e8;border:1px solid #8c8c8c;box-sizing:border-box"></div>
<svg style="position:absolute;left:179px;top:758px;" width="7" height="7" viewBox="0 0 7 7"><polygon points="7,0 7,7 0,7" fill="#000"/></svg>
<div class="t" style="left:205px;top:756px;font-size:12px;line-height:12px;color:#3c3c3c;">Detailing</div>
<div style="left:171px;top:797px;width:398px;height:27px;background:#e8e8e8;border:1px solid #8c8c8c;box-sizing:border-box"></div>
<svg style="position:absolute;left:179px;top:807px;" width="7" height="7" viewBox="0 0 7 7"><polygon points="7,0 7,7 0,7" fill="#000"/></svg>
<div class="t" style="left:205px;top:805px;font-size:12px;line-height:12px;color:#3c3c3c;">Deflections</div>
<div style="left:171px;top:848px;width:398px;height:27px;background:#e8e8e8;border:1px solid #8c8c8c;box-sizing:border-box"></div>
<svg style="position:absolute;left:179px;top:858px;" width="7" height="7" viewBox="0 0 7 7"><polygon points="7,0 7,7 0,7" fill="#000"/></svg>
<div class="t" style="left:205px;top:856px;font-size:12px;line-height:12px;color:#3c3c3c;">Reduction and redistribution</div>
<div style="left:171px;top:963px;width:398px;height:27px;background:#e8e8e8;border:1px solid #8c8c8c;box-sizing:border-box"></div>
<svg style="position:absolute;left:179px;top:973px;" width="7" height="7" viewBox="0 0 7 7"><polygon points="7,0 7,7 0,7" fill="#000"/></svg>
<div class="t" style="left:205px;top:971px;font-size:12px;line-height:12px;color:#3c3c3c;">Lateral stability</div>
<div style="position:absolute;left:196px;top:560px;width:150px;height:460px;overflow:hidden">
<div class="t" style="left:10px;top:34px;font-size:12px;line-height:12px;color:#000">Capacity N-M-M</div>
<div class="t" style="left:10px;top:56px;font-size:12px;line-height:12px;color:#000">Shear</div>
<div class="t" style="left:10px;top:78px;font-size:12px;line-height:12px;color:#000">Torsion</div>
<div class="t" style="left:10px;top:100px;font-size:12px;line-height:12px;color:#000">Interaction</div>
<div class="t" style="left:10px;top:149px;font-size:12px;line-height:12px;color:#000">Stress limitation</div>
<div class="t" style="left:10px;top:171px;font-size:12px;line-height:12px;color:#000">Crack width</div>
<div class="t" style="left:10px;top:220px;font-size:12px;line-height:12px;color:#000">Detailing</div>
<div class="t" style="left:10px;top:320px;font-size:12px;line-height:12px;color:#000">Redistribution of moments</div>
<div class="t" style="left:10px;top:342px;font-size:12px;line-height:12px;color:#000">Reduction of moments</div>
<div class="t" style="left:10px;top:364px;font-size:12px;line-height:12px;color:#000">Reduction of shear force</div>
<div class="t" style="left:10px;top:386px;font-size:12px;line-height:12px;color:#000">Limited interaction check</div>
<div class="t" style="left:10px;top:435px;font-size:12px;line-height:12px;color:#000">Lateral stability</div>
<div class="t" style="left:10px;top:271px;font-size:12px;line-height:12px;color:#000">Deflections</div>
</div>
<svg style="position:absolute;left:355px;top:594px;" width="13" height="13" viewBox="0 0 13 13"><defs><linearGradient id="cbg" x1="0" y1="0" x2="1" y2="1"><stop offset="0" stop-color="#a8a8a8"/><stop offset="0.5" stop-color="#dcdcdc"/><stop offset="1" stop-color="#f4f4f4"/></linearGradient></defs><rect x="0.5" y="0.5" width="12" height="12" fill="#fff" stroke="#8e8e8e"/><rect x="2.5" y="2.5" width="8" height="8" fill="url(#cbg)" stroke="#3a3a3a"/><path d="M3.3 7.2 L5.4 9.6 L9.4 2.6" fill="none" stroke="#000" stroke-width="1.5"/></svg>
<svg style="position:absolute;left:355px;top:616px;" width="13" height="13" viewBox="0 0 13 13"><defs><linearGradient id="cbg" x1="0" y1="0" x2="1" y2="1"><stop offset="0" stop-color="#a8a8a8"/><stop offset="0.5" stop-color="#dcdcdc"/><stop offset="1" stop-color="#f4f4f4"/></linearGradient></defs><rect x="0.5" y="0.5" width="12" height="12" fill="#fff" stroke="#8e8e8e"/><rect x="2.5" y="2.5" width="8" height="8" fill="url(#cbg)" stroke="#3a3a3a"/><path d="M3.3 7.2 L5.4 9.6 L9.4 2.6" fill="none" stroke="#000" stroke-width="1.5"/></svg>
<svg style="position:absolute;left:355px;top:638px;" width="13" height="13" viewBox="0 0 13 13"><defs><linearGradient id="cbg" x1="0" y1="0" x2="1" y2="1"><stop offset="0" stop-color="#a8a8a8"/><stop offset="0.5" stop-color="#dcdcdc"/><stop offset="1" stop-color="#f4f4f4"/></linearGradient></defs><rect x="0.5" y="0.5" width="12" height="12" fill="#fff" stroke="#8e8e8e"/><rect x="2.5" y="2.5" width="8" height="8" fill="url(#cbg)" stroke="#3a3a3a"/><path d="M3.3 7.2 L5.4 9.6 L9.4 2.6" fill="none" stroke="#000" stroke-width="1.5"/></svg>
<svg style="position:absolute;left:355px;top:660px;" width="13" height="13" viewBox="0 0 13 13"><defs><linearGradient id="cbg" x1="0" y1="0" x2="1" y2="1"><stop offset="0" stop-color="#a8a8a8"/><stop offset="0.5" stop-color="#dcdcdc"/><stop offset="1" stop-color="#f4f4f4"/></linearGradient></defs><rect x="0.5" y="0.5" width="12" height="12" fill="#fff" stroke="#8e8e8e"/><rect x="2.5" y="2.5" width="8" height="8" fill="url(#cbg)" stroke="#3a3a3a"/><path d="M3.3 7.2 L5.4 9.6 L9.4 2.6" fill="none" stroke="#000" stroke-width="1.5"/></svg>
<svg style="position:absolute;left:355px;top:709px;" width="13" height="13" viewBox="0 0 13 13"><defs><linearGradient id="cbg" x1="0" y1="0" x2="1" y2="1"><stop offset="0" stop-color="#a8a8a8"/><stop offset="0.5" stop-color="#dcdcdc"/><stop offset="1" stop-color="#f4f4f4"/></linearGradient></defs><rect x="0.5" y="0.5" width="12" height="12" fill="#fff" stroke="#8e8e8e"/><rect x="2.5" y="2.5" width="8" height="8" fill="url(#cbg)" stroke="#3a3a3a"/><path d="M3.3 7.2 L5.4 9.6 L9.4 2.6" fill="none" stroke="#000" stroke-width="1.5"/></svg>
<svg style="position:absolute;left:355px;top:731px;" width="13" height="13" viewBox="0 0 13 13"><defs><linearGradient id="cbg" x1="0" y1="0" x2="1" y2="1"><stop offset="0" stop-color="#a8a8a8"/><stop offset="0.5" stop-color="#dcdcdc"/><stop offset="1" stop-color="#f4f4f4"/></linearGradient></defs><rect x="0.5" y="0.5" width="12" height="12" fill="#fff" stroke="#8e8e8e"/><rect x="2.5" y="2.5" width="8" height="8" fill="url(#cbg)" stroke="#3a3a3a"/><path d="M3.3 7.2 L5.4 9.6 L9.4 2.6" fill="none" stroke="#000" stroke-width="1.5"/></svg>
<svg style="position:absolute;left:355px;top:780px;" width="13" height="13" viewBox="0 0 13 13"><defs><linearGradient id="cbg" x1="0" y1="0" x2="1" y2="1"><stop offset="0" stop-color="#a8a8a8"/><stop offset="0.5" stop-color="#dcdcdc"/><stop offset="1" stop-color="#f4f4f4"/></linearGradient></defs><rect x="0.5" y="0.5" width="12" height="12" fill="#fff" stroke="#8e8e8e"/><rect x="2.5" y="2.5" width="8" height="8" fill="url(#cbg)" stroke="#3a3a3a"/><path d="M3.3 7.2 L5.4 9.6 L9.4 2.6" fill="none" stroke="#000" stroke-width="1.5"/></svg>
<svg style="position:absolute;left:355px;top:880px;" width="13" height="13" viewBox="0 0 13 13"><defs><linearGradient id="cbg" x1="0" y1="0" x2="1" y2="1"><stop offset="0" stop-color="#a8a8a8"/><stop offset="0.5" stop-color="#dcdcdc"/><stop offset="1" stop-color="#f4f4f4"/></linearGradient></defs><rect x="0.5" y="0.5" width="12" height="12" fill="#fff" stroke="#8e8e8e"/><rect x="2.5" y="2.5" width="8" height="8" fill="url(#cbg)" stroke="#3a3a3a"/></svg>
<svg style="position:absolute;left:355px;top:902px;" width="13" height="13" viewBox="0 0 13 13"><defs><linearGradient id="cbg" x1="0" y1="0" x2="1" y2="1"><stop offset="0" stop-color="#a8a8a8"/><stop offset="0.5" stop-color="#dcdcdc"/><stop offset="1" stop-color="#f4f4f4"/></linearGradient></defs><rect x="0.5" y="0.5" width="12" height="12" fill="#fff" stroke="#8e8e8e"/><rect x="2.5" y="2.5" width="8" height="8" fill="url(#cbg)" stroke="#3a3a3a"/></svg>
<svg style="position:absolute;left:355px;top:924px;" width="13" height="13" viewBox="0 0 13 13"><defs><linearGradient id="cbg" x1="0" y1="0" x2="1" y2="1"><stop offset="0" stop-color="#a8a8a8"/><stop offset="0.5" stop-color="#dcdcdc"/><stop offset="1" stop-color="#f4f4f4"/></linearGradient></defs><rect x="0.5" y="0.5" width="12" height="12" fill="#fff" stroke="#8e8e8e"/><rect x="2.5" y="2.5" width="8" height="8" fill="url(#cbg)" stroke="#3a3a3a"/></svg>
<svg style="position:absolute;left:355px;top:946px;" width="13" height="13" viewBox="0 0 13 13"><defs><linearGradient id="cbg" x1="0" y1="0" x2="1" y2="1"><stop offset="0" stop-color="#a8a8a8"/><stop offset="0.5" stop-color="#dcdcdc"/><stop offset="1" stop-color="#f4f4f4"/></linearGradient></defs><rect x="0.5" y="0.5" width="12" height="12" fill="#fff" stroke="#8e8e8e"/><rect x="2.5" y="2.5" width="8" height="8" fill="url(#cbg)" stroke="#3a3a3a"/></svg>
<svg style="position:absolute;left:355px;top:995px;" width="13" height="13" viewBox="0 0 13 13"><defs><linearGradient id="cbg" x1="0" y1="0" x2="1" y2="1"><stop offset="0" stop-color="#a8a8a8"/><stop offset="0.5" stop-color="#dcdcdc"/><stop offset="1" stop-color="#f4f4f4"/></linearGradient></defs><rect x="0.5" y="0.5" width="12" height="12" fill="#fff" stroke="#8e8e8e"/><rect x="2.5" y="2.5" width="8" height="8" fill="url(#cbg)" stroke="#3a3a3a"/></svg>
<div style="left:350px;top:825px;width:216px;height:23px;background:linear-gradient(180deg,#f6f6f6 0%,#ececec 48%,#a9a9a9 50%,#c6c6c6 100%);border:1px solid #8a8a8a;box-shadow:inset 0 0 0 1px #fdfdfd;box-sizing:border-box;border-radius:3px"></div>
<div class="t" style="left:353px;top:831px;font-size:12px;line-height:12px;color:#000;">Detailed calculation</div>
<svg style="position:absolute;left:556px;top:835px;" width="5" height="3" viewBox="0 0 5 3"><polygon points="0,0 5,0 2.5,3" fill="#000"/></svg>
<div style="left:345px;top:987px;width:32px;height:31px;border:4px solid #f00;box-sizing:border-box;border-radius:9px"></div>
<div style="left:580px;top:561px;width:400px;height:263px;background:#f4f4f4"></div>
<div style="left:581px;top:562px;width:398px;height:261px;background:#fff"></div>
<div style="left:581px;top:562px;width:25px;height:261px;background:#e8e8e8"></div>
<div style="left:605px;top:562px;width:1px;height:261px;background:#8c8c8c"></div>
<div style="left:581px;top:562px;width:1px;height:261px;background:#d0d0d0"></div>
<div style="left:978px;top:562px;width:1px;height:261px;background:#8c8c8c"></div>
<div style="left:581px;top:823px;width:398px;height:1px;background:#d4d4d4"></div>
<div style="left:581px;top:562px;width:398px;height:27px;background:#e8e8e8;border:1px solid #8c8c8c;box-sizing:border-box"></div>
<svg style="position:absolute;left:589px;top:572px;" width="7" height="7" viewBox="0 0 7 7"><polygon points="7,0 7,7 0,7" fill="#000"/></svg>
<div class="t" style="left:615px;top:570px;font-size:12px;line-height:12px;color:#3c3c3c;">Exposure class</div>
<div style="left:581px;top:731px;width:398px;height:27px;background:#e8e8e8;border:1px solid #8c8c8c;box-sizing:border-box"></div>
<svg style="position:absolute;left:589px;top:741px;" width="7" height="7" viewBox="0 0 7 7"><polygon points="7,0 7,7 0,7" fill="#000"/></svg>
<div class="t" style="left:616px;top:594px;font-size:12px;line-height:12px;color:#000;">No corrosion (X0)</div>
<svg style="position:absolute;left:765px;top:594px;" width="13" height="13" viewBox="0 0 13 13"><defs><linearGradient id="cbg" x1="0" y1="0" x2="1" y2="1"><stop offset="0" stop-color="#a8a8a8"/><stop offset="0.5" stop-color="#dcdcdc"/><stop offset="1" stop-color="#f4f4f4"/></linearGradient></defs><rect x="0.5" y="0.5" width="12" height="12" fill="#fff" stroke="#8e8e8e"/><rect x="2.5" y="2.5" width="8" height="8" fill="url(#cbg)" stroke="#3a3a3a"/></svg>
<div class="t" style="left:616px;top:618px;font-size:12px;line-height:12px;color:#000;">Carbonation</div>
<div style="left:761px;top:612px;width:215px;height:22px;background:linear-gradient(180deg,#f6f6f6 0%,#ececec 48%,#a9a9a9 50%,#c6c6c6 100%);border:1px solid #8a8a8a;box-shadow:inset 0 0 0 1px #fdfdfd;box-sizing:border-box;border-radius:3px"></div>
<div class="t" style="left:764px;top:618px;font-size:12px;line-height:12px;color:#000;">XC3 - Moderate humidity</div>
<svg style="position:absolute;left:966px;top:622px;" width="5" height="3" viewBox="0 0 5 3"><polygon points="0,0 5,0 2.5,3" fill="#000"/></svg>
<div class="t" style="left:616px;top:642px;font-size:12px;line-height:12px;color:#000;">Chlorides</div>
<div style="left:761px;top:636px;width:215px;height:22px;background:linear-gradient(180deg,#f6f6f6 0%,#ececec 48%,#a9a9a9 50%,#c6c6c6 100%);border:1px solid #8a8a8a;box-shadow:inset 0 0 0 1px #fdfdfd;box-sizing:border-box;border-radius:3px"></div>
<div class="t" style="left:764px;top:642px;font-size:12px;line-height:12px;color:#000;">XD1 - Moderate humidity</div>
<svg style="position:absolute;left:966px;top:646px;" width="5" height="3" viewBox="0 0 5 3"><polygon points="0,0 5,0 2.5,3" fill="#000"/></svg>
<div class="t" style="left:616px;top:666px;font-size:12px;line-height:12px;color:#000;">Chlorides from sea</div>
<div style="left:761px;top:660px;width:215px;height:22px;background:linear-gradient(180deg,#f6f6f6 0%,#ececec 48%,#a9a9a9 50%,#c6c6c6 100%);border:1px solid #8a8a8a;box-shadow:inset 0 0 0 1px #fdfdfd;box-sizing:border-box;border-radius:3px"></div>
<div class="t" style="left:764px;top:666px;font-size:12px;line-height:12px;color:#000;">No risk of chlorides from sea</div>
<svg style="position:absolute;left:966px;top:670px;" width="5" height="3" viewBox="0 0 5 3"><polygon points="0,0 5,0 2.5,3" fill="#000"/></svg>
<div class="t" style="left:616px;top:690px;font-size:12px;line-height:12px;color:#000;">Freeze/Thaw Attack</div>
<div style="left:761px;top:684px;width:215px;height:22px;background:linear-gradient(180deg,#f6f6f6 0%,#ececec 48%,#a9a9a9 50%,#c6c6c6 100%);border:1px solid #8a8a8a;box-shadow:inset 0 0 0 1px #fdfdfd;box-sizing:border-box;border-radius:3px"></div>
<div class="t" style="left:764px;top:690px;font-size:12px;line-height:12px;color:#000;">No risk of freeze/thaw attack</div>
<svg style="position:absolute;left:966px;top:694px;" width="5" height="3" viewBox="0 0 5 3"><polygon points="0,0 5,0 2.5,3" fill="#000"/></svg>
<div class="t" style="left:616px;top:714px;font-size:12px;line-height:12px;color:#000;">Chemical Attack</div>
<div style="left:761px;top:708px;width:215px;height:22px;background:linear-gradient(180deg,#f6f6f6 0%,#ececec 48%,#a9a9a9 50%,#c6c6c6 100%);border:1px solid #8a8a8a;box-shadow:inset 0 0 0 1px #fdfdfd;box-sizing:border-box;border-radius:3px"></div>
<div class="t" style="left:764px;top:714px;font-size:12px;line-height:12px;color:#000;">No risk of chemical attack</div>
<svg style="position:absolute;left:966px;top:718px;" width="5" height="3" viewBox="0 0 5 3"><polygon points="0,0 5,0 2.5,3" fill="#000"/></svg>
<div class="t" style="left:616px;top:761px;font-size:12px;line-height:12px;color:#8a8a8a;">Relative humidity [%]</div>
<div class="t" style="left:762px;top:761px;font-size:12px;line-height:12px;color:#8a8a8a;">65</div>
<div class="t" style="left:616px;top:782px;font-size:12px;line-height:12px;color:#8a8a8a;">Member type</div>
<div style="left:761px;top:777px;width:215px;height:22px;background:#f0f0f0;border:1px solid #c8c8c8;box-sizing:border-box;border-radius:3px"></div>
<div class="t" style="left:764px;top:783px;font-size:12px;line-height:12px;color:#9a9a9a;">Beam</div>
<svg style="position:absolute;left:966px;top:787px;" width="5" height="3" viewBox="0 0 5 3"><polygon points="0,0 5,0 2.5,3" fill="#c0c0c0"/></svg>
<div class="t" style="left:616px;top:806px;font-size:12px;line-height:12px;color:#000;">Structural member import</div>
<div style="left:761px;top:801px;width:215px;height:22px;background:linear-gradient(180deg,#f6f6f6 0%,#ececec 48%,#a9a9a9 50%,#c6c6c6 100%);border:1px solid #8a8a8a;box-shadow:inset 0 0 0 1px #fdfdfd;box-sizing:border-box;border-radius:3px"></div>
<div class="t" style="left:764px;top:807px;font-size:12px;line-height:12px;color:#000;">Major</div>
<svg style="position:absolute;left:966px;top:811px;" width="5" height="3" viewBox="0 0 5 3"><polygon points="0,0 5,0 2.5,3" fill="#000"/></svg>
<div style="left:0px;top:1040px;width:1092px;height:1px;background:#000"></div>
</body></html>
